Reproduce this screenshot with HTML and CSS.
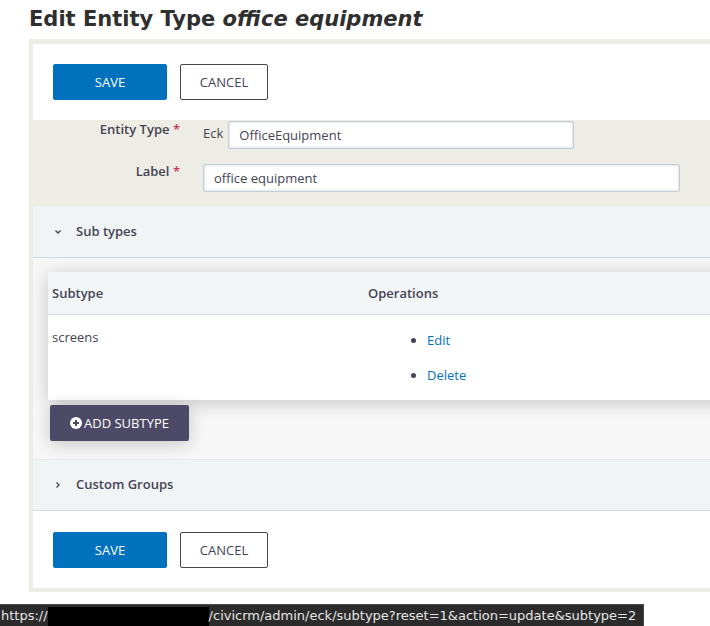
FILE: index.html
```html
<!DOCTYPE html>
<html>
<head>
<meta charset="utf-8">
<link rel="stylesheet" href="styles.css">
</head>
<body>
<h1 class="page-title">Edit Entity Type <em>office equipment</em></h1>
<div class="crm-container">
  <div class="button-bar">
    <button class="btn btn-primary">SAVE</button>
    <button class="btn btn-outline">CANCEL</button>
  </div>
  <div class="form-area">
    <div class="form-row">
      <label class="form-label">Entity Type <span class="req">*</span></label>
      <div class="form-field">
        <span class="prefix">Eck</span>
        <input class="text-input input-short" type="text" value="OfficeEquipment">
      </div>
    </div>
    <div class="form-row">
      <label class="form-label">Label <span class="req">*</span></label>
      <div class="form-field">
        <input class="text-input input-long" type="text" value="office equipment">
      </div>
    </div>
  </div>
  <div class="accordion-head">
    <svg class="chev" width="8" height="8" viewBox="0 0 8 8"><polyline points="1.5,2.5 4,5 6.5,2.5" fill="none" stroke="#464354" stroke-width="1.3"/></svg>
    <span>Sub types</span>
  </div>
  <div class="accordion-body">
    <table class="data-table">
      <thead>
        <tr><th class="col-sub">Subtype</th><th>Operations</th></tr>
      </thead>
      <tbody>
        <tr>
          <td class="col-sub">screens</td>
          <td>
            <ul class="ops">
              <li><a href="#">Edit</a></li>
              <li><a href="#">Delete</a></li>
            </ul>
          </td>
        </tr>
      </tbody>
    </table>
    <button class="btn btn-secondary">
      <svg class="plus-icon" width="12" height="12" viewBox="0 0 12 12"><circle cx="6" cy="6" r="6" fill="#fff"/><path d="M6 3v6M3 6h6" stroke="#4d4a68" stroke-width="2"/></svg>
      ADD SUBTYPE
    </button>
  </div>
  <div class="accordion-head closed">
    <svg class="chev" width="8" height="8" viewBox="0 0 8 8"><polyline points="2.5,1.5 5,4 2.5,6.5" fill="none" stroke="#464354" stroke-width="1.3"/></svg>
    <span>Custom Groups</span>
  </div>
  <div class="button-bar bottom">
    <button class="btn btn-primary">SAVE</button>
    <button class="btn btn-outline">CANCEL</button>
  </div>
</div>
<div class="status-bar">https://<span class="redact"></span>/civicrm/admin/eck/subtype?reset=1&amp;action=update&amp;subtype=2</div>
</body>
</html>
```

FILE: styles.css
```css
html, body {
  margin: 0;
  padding: 0;
  overflow: hidden;
  background: #fff;
}
body {
  font-family: "Open Sans", sans-serif;
  font-size: 13px;
  color: #464354;
  width: 710px;
  height: 626px;
}
.page-title {
  font-family: "DejaVu Sans", sans-serif;
  font-size: 21px;
  line-height: 24px;
  font-weight: bold;
  color: #2f2f2f;
  margin: 7px 0 8px 29px;
}
.page-title em {
  font-style: italic;
}
.crm-container {
  margin-left: 29px;
  width: 760px;
  border: 4px solid #eeede5;
  border-top-width: 5px;
  background: #fff;
}
.button-bar {
  display: flex;
  gap: 13px;
  padding: 20px 20px 20px 20px;
  background: #fff;
}
.button-bar.bottom {
  padding: 21px 20px 20px 20px;
}
.btn {
  font-family: "Open Sans", sans-serif;
  font-size: 13px;
  height: 36px;
  border-radius: 2px;
  cursor: pointer;
  padding: 0;
}
.btn-primary {
  width: 114px;
  background: #0071bd;
  color: #fff;
  border: 1px solid #0071bd;
}
.btn-outline {
  width: 88px;
  background: #fff;
  color: #464354;
  border: 1px solid #464354;
}
.btn-secondary {
  width: 139px;
  background: #4d4a68;
  color: #fff;
  border: 0;
  display: flex;
  align-items: center;
  padding-left: 20px;
  gap: 2px;
  margin: 5px 0 0 2px;
  box-shadow: 0 3px 18px rgba(0, 0, 0, 0.2);
}
.plus-icon {
  flex: none;
}
.form-area {
  background: #eeede5;
  padding: 1px 0 14px 0;
  display: flex;
  flex-direction: column;
  gap: 14px;
}
.form-row {
  display: flex;
  align-items: flex-start;
}
.form-label {
  width: 147px;
  text-align: right;
  font-weight: 600;
  line-height: 17px;
  margin-right: 23px;
}
.req {
  color: #cf3458;
}
.form-field {
  display: flex;
  align-items: center;
}
.prefix {
  margin-right: 5px;
  line-height: 28px;
  position: relative;
  top: -2px;
}
.text-input {
  font-family: "Open Sans", sans-serif;
  font-size: 13px;
  color: #464354;
  height: 28px;
  box-sizing: border-box;
  border: 1px solid #c2cfd8;
  border-radius: 2px;
  box-shadow: inset 0 0 3px rgba(0, 0, 0, 0.2);
  padding: 0 10px;
  background: #fff;
  outline: none;
}
.input-short {
  width: 346px;
}
.input-long {
  width: 477px;
  margin-top: 1px;
}
.accordion-head {
  background: #f1f4f5;
  height: 51px;
  border-bottom: 1px solid #d3dce2;
  display: flex;
  align-items: center;
  font-weight: 600;
  padding-left: 21px;
  gap: 14px;
}
.accordion-head span {
  position: relative;
  top: -1px;
}
.accordion-head.closed {
  height: 50px;
  border-top: 1px solid #e6e9eb;
}
.chev {
  flex: none;
}
.accordion-body {
  background: #f7f7f7;
  padding: 14px 0 18px 15px;
}
.data-table {
  width: 100%;
  border-collapse: collapse;
  background: #fff;
  box-shadow: 0 3px 18px rgba(0, 0, 0, 0.2);
}
.data-table th {
  background: #f3f6f7;
  text-align: left;
  font-weight: 600;
  height: 42px;
  padding: 0 4px;
  border-bottom: 1px solid #d9dfe3;
}
.data-table td {
  vertical-align: top;
  padding: 13px 4px 16px 4px;
  line-height: 18px;
}
.col-sub {
  width: 308px;
}
.ops {
  margin: 3px 0 0 0;
  padding-left: 59px;
  list-style: disc;
}
.ops li + li {
  margin-top: 17px;
}
.ops a {
  color: #0071bd;
  text-decoration: none;
}
.status-bar {
  position: fixed;
  left: 0;
  bottom: 0;
  height: 22px;
  width: 644px;
  box-sizing: border-box;
  background: #2b2b2b;
  border: 1px solid #4a4a4a;
  border-left: 0;
  border-bottom: 0;
  color: #e6e6e6;
  font-family: "DejaVu Sans", sans-serif;
  font-size: 13px;
  line-height: 21px;
  padding-left: 1px;
  white-space: nowrap;
}
.redact {
  display: inline-block;
  width: 161px;
  height: 19px;
  background: #000;
  vertical-align: bottom;
}
```
